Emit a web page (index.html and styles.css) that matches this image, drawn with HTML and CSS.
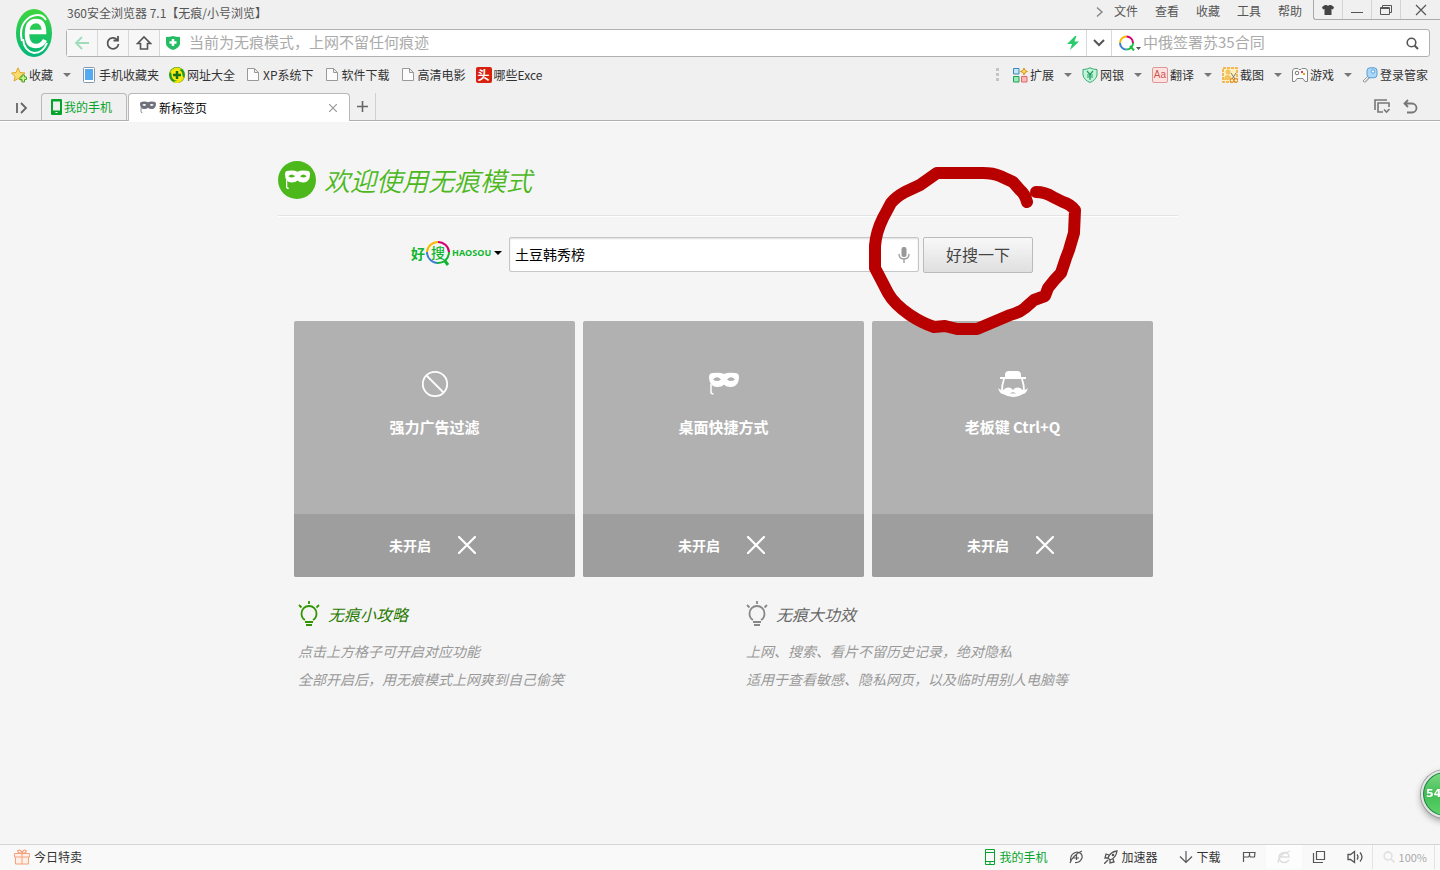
FILE: index.html
```html
<!DOCTYPE html>
<html lang="zh-CN">
<head>
	<meta charset="utf-8">
	<title>新标签页</title>
	<link rel="stylesheet" href="styles.css">
</head>
<body>
	<svg class="defs" width="0" height="0">
		<symbol id="mask" viewBox="0 0 30 24">
			<path fill="currentColor" fill-rule="evenodd" d="M0 5Q0 1 4 1Q11 0 15 2Q19 0 26 1Q30 1 30 5Q30 14.500 22 15Q17 15 15 12.500Q13 15 8 15Q0 14.500 0 5ZM4 7.500Q8 3 12 7.500Q8 10.500 4 7.500ZM18 7.500Q22 3 26 7.500Q22 10.500 18 7.500Z"/>
			<path d="M2 12V20Q2 22 4.500 22" fill="none" stroke="currentColor" stroke-width="1.500"/>
		</symbol>
		<symbol id="doc" viewBox="0 0 16 16">
			<path d="M2.500 1.500H9.500L13.500 5.500V13.500H2.500ZM9.500 1.500V5.500H13.500" fill="#fcfcfc" stroke="#999"/>
		</symbol>
		<symbol id="bulb" viewBox="0 0 22 26">
			<path d="M7 19Q3.500 17 3.500 12.500A7.500 7.500 0 0 1 18.500 12.500Q18.500 17 15 19M7 21H15M8 24H14M11 0V3M1 4L3.500 6.500M21 4L18.500 6.500" fill="none" stroke="currentColor" stroke-width="1.800"/>
		</symbol>
		<symbol id="cross" viewBox="0 0 20 20">
			<path d="M2 2L18 18M18 2L2 18" stroke="#fff" stroke-width="2.200" stroke-linecap="round"/>
		</symbol>
	</svg>

	<header>
		<div class="top">
			<svg class="logo" width="36" height="48" viewBox="0 0 36 48">
				<defs><linearGradient id="green" x2="0" y2="1"><stop stop-color="#3ed63c"/><stop offset="1" stop-color="#02b67c"/></linearGradient></defs>
				<ellipse cx="18" cy="24" rx="18" ry="24" fill="url(#green)"/>
				<path d="M12 23H28Q28 12 20 12Q11 12 11 25Q11 37 20 37Q26 37 29 31" fill="none" stroke="#fff" stroke-width="4.500"/>
				<path d="M6 32Q2 16 14 8Q25 3 30 11M7 30Q8 42 18 44Q27 44 31 34" fill="none" stroke="#fff" stroke-width="2"/>
			</svg>
			<div class="rows">
				<div class="titlebar">
					<span class="title">360安全浏览器 7.1【无痕/小号浏览】</span>
					<nav class="menu">
						<svg width="8" height="12" viewBox="0 0 8 12"><path d="M1 1.500L6 6L1 10.500" fill="none" stroke="#888" stroke-width="1.500"/></svg>
						<a href="#">文件</a>
						<a href="#">查看</a>
						<a href="#">收藏</a>
						<a href="#">工具</a>
						<a href="#">帮助</a>
					</nav>
					<div class="winbuttons">
						<button type="button" aria-label="皮肤"><svg width="12" height="10" viewBox="0 0 12 10"><path d="M3 0H4.500Q6 1.500 7.500 0H9L12 2L11 4.500L9.500 4V10H2.500V4L1 4.500L0 2Z" fill="#444"/></svg></button>
						<button type="button" aria-label="最小化"><svg width="12" height="10" viewBox="0 0 12 10"><path d="M0 7.500H12" stroke="#555"/></svg></button>
						<button type="button" aria-label="还原"><svg width="12" height="10" viewBox="0 0 12 10"><path d="M2.500 2V.5H11.500V7.500H10M.5 2.500H9.500V9.500H.5ZM.5 3.500H9.500" fill="none" stroke="#555"/></svg></button>
						<button type="button" class="close" aria-label="关闭"><svg width="12" height="12" viewBox="0 0 12 12"><path d="M1 1L11 11M11 1L1 11" stroke="#555" stroke-width="1.200"/></svg></button>
					</div>
				</div>
				<div class="address">
					<button type="button" aria-label="后退"><svg width="16" height="16" viewBox="0 0 16 16"><path d="M15 8H2M8 2L2 8L8 14" fill="none" stroke="#9edcba" stroke-width="1.800"/></svg></button>
					<button type="button" aria-label="刷新"><svg width="16" height="16" viewBox="0 0 16 16"><path d="M12 4.500A5.500 5.500 0 1 0 13.500 9M13 1V5.500H8.500" fill="none" stroke="#555" stroke-width="1.800"/></svg></button>
					<button type="button" aria-label="主页"><svg width="16" height="16" viewBox="0 0 16 16"><path d="M1.500 8.500L8 2L14.500 8.500H11.500V14H4.500V8.500Z" fill="none" stroke="#555" stroke-width="1.600"/></svg></button>
					<svg class="shield" width="14" height="14" viewBox="0 0 14 14"><path d="M0 1Q4 1 7 0Q10 1 14 1V8Q13 12 7 14Q1 12 0 8Z" fill="#25bd63"/><path d="M7 3V10M3.500 6.500H10.500" stroke="#fff" stroke-width="2.500"/></svg>
					<input class="url" type="text" aria-label="地址栏" placeholder="当前为无痕模式，上网不留任何痕迹">
					<svg class="bolt" width="14" height="14" viewBox="0 0 14 14"><path d="M9 0L1 8H6L4 14L13 5.500H8.500L10.500 0Z" fill="#2bcb6b"/></svg>
					<button type="button" class="drop" aria-label="展开"><svg width="12" height="8" viewBox="0 0 12 8"><path d="M1 1L6 6L11 1" fill="none" stroke="#555" stroke-width="2"/></svg></button>
					<svg class="engine" width="22" height="16" viewBox="0 0 22 16"><g fill="none" stroke-width="2"><path d="M1 8A6.500 6.500 0 0 1 7.500 1.500" stroke="#f9b800"/><path d="M7.500 1.500A6.500 6.500 0 0 1 14 8" stroke="#d6006c"/><path d="M14 8A6.500 6.500 0 0 1 7.500 14.500M11 11L15 15.500" stroke="#1bc043"/><path d="M7.500 14.500A6.500 6.500 0 0 1 1 8" stroke="#3d80d0"/></g><path d="M17 12H22L19.500 15Z" fill="#555"/></svg>
					<input class="find" type="text" aria-label="搜索" placeholder="中俄签署苏35合同">
					<svg width="13" height="13" viewBox="0 0 13 13"><circle cx="5.500" cy="5.500" r="4.300" fill="none" stroke="#555" stroke-width="1.600"/><path d="M8.500 8.500L12 12" stroke="#555" stroke-width="2"/></svg>
				</div>
			</div>
		</div>

		<div class="bookmarks">
			<a href="#"><svg width="16" height="16" viewBox="0 0 16 16"><path d="M7 .8L9 5.500L14 6L10 9.500L11 14L7 11.500L3 14L4 9.500L.5 6L5 5.500Z" fill="#fbdc6c" stroke="#dfa52e"/><path d="M9 10H11V8H13.500V10H15.500V12.500H13.500V15H11V12.500H9Z" fill="#c8f58e" stroke="#44a323"/></svg>收藏</a>
			<i class="caret"></i>
			<a href="#"><svg width="16" height="16" viewBox="0 0 16 16"><rect x="2.500" y=".5" width="11" height="15" rx="1" fill="#fff" stroke="#8297aa"/><rect x="4" y="2" width="8" height="11" fill="#55a9ef"/></svg>手机收藏夹</a>
			<a href="#"><svg width="16" height="16" viewBox="0 0 16 16"><circle cx="8" cy="8" r="8" fill="#249c16"/><path d="M1 5A8 8 0 0 1 13 2L8 4L4 8ZM15 11A8 8 0 0 1 4 15L9 13L13 8Z" fill="#f5e000"/><circle cx="8" cy="8" r="5.500" fill="#fae918"/><path d="M8 4V12M4 8H12" stroke="#137316" stroke-width="2.500"/></svg>网址大全</a>
			<a href="#"><svg width="16" height="16"><use href="#doc"/></svg>XP系统下</a>
			<a href="#"><svg width="16" height="16"><use href="#doc"/></svg>软件下载</a>
			<a href="#"><svg width="16" height="16"><use href="#doc"/></svg>高清电影</a>
			<a href="#"><span class="tou">头</span>哪些Exce</a>
			<div class="tools">
				<svg class="dots" width="3" height="14" viewBox="0 0 3 14"><path d="M0 1.500H3M0 6.500H3M0 11.500H3" stroke="#c4c4c4" stroke-width="3"/></svg>
				<a href="#"><svg width="16" height="16" viewBox="0 0 16 16"><path d="M1.500 1.500H7V7H1.500Z" fill="#c3e6fb" stroke="#3d86b8"/><path d="M1.500 9.500H7V15H1.500Z" fill="#91eeb8" stroke="#279d5c"/><path d="M9.500 9.500H15V15H9.500Z" fill="#ffb9b9" stroke="#d66"/><path d="M12 1L13 3.500L15.500 4.500L13 5.500L12 8L11 5.500L8.500 4.500L11 3.500Z" fill="#ffe55c" stroke="#d79216"/></svg>扩展</a>
				<i class="caret"></i>
				<a href="#"><svg width="16" height="16" viewBox="0 0 16 16"><path d="M8 .8Q11 2.500 15 2.500V8Q14 13 8 15.500Q2 13 1 8V2.500Q5 2.500 8 .8Z" fill="#c2f5d8" stroke="#3aaa74"/><path d="M5 4L8 7.500L11 4M5 8H11M5 10H11M8 7.500V13" fill="none" stroke="#269e63" stroke-width="1.200"/></svg>网银</a>
				<i class="caret"></i>
				<a href="#"><span class="aa">Aa</span>翻译</a>
				<i class="caret"></i>
				<a href="#"><svg width="16" height="16" viewBox="0 0 16 16"><rect x="1" y="1" width="14" height="14" fill="#fff1bd" stroke="#efa52d" stroke-width="1.500" stroke-dasharray="3 1"/><circle cx="6" cy="5" r="2.500" fill="#f2c562"/><path d="M2 13Q2 8 6 8Q9 8 10 13Z" fill="#f2c562"/><path d="M9 6L13 12M14 6L10 12" stroke="#777"/><circle cx="10" cy="13.500" r="1.800" fill="#fff1bd" stroke="#d97b16"/><circle cx="14" cy="13.500" r="1.800" fill="#fff1bd" stroke="#d97b16"/></svg>截图</a>
				<i class="caret"></i>
				<a href="#"><svg width="16" height="16" viewBox="0 0 16 16"><path d="M3 1.500H6L7 2.500H9L10 1.500H13Q15 1.500 15.500 4V14.500H13L11 11.500H5L3 14.500H.5V4Q1 1.500 3 1.500Z" fill="#fcfcfc" stroke="#858585"/><circle cx="5" cy="6" r="1.800" fill="none" stroke="#777"/><path d="M9 4H11V6H9Z" fill="#e33"/><path d="M11 6H13V8H11Z" fill="#e9a31b"/></svg>游戏</a>
				<i class="caret"></i>
				<a href="#"><svg width="16" height="16" viewBox="0 0 16 16"><path d="M6 9L1 14L2 15H4V13H6V11H8" fill="#fff" stroke="#999"/><rect x="5" y=".8" width="10" height="10" rx="3" fill="#aad8fa" stroke="#5b9ed0"/><circle cx="11" cy="4.500" r="1.700" fill="#fff" stroke="#5b9ed0"/></svg>登录管家</a>
			</div>
		</div>

		<div class="tabs">
			<button type="button" class="side" aria-label="侧边栏"><svg width="12" height="12" viewBox="0 0 12 12"><path d="M1 1V11M5 1L10 6L5 11" fill="none" stroke="#666" stroke-width="1.800"/></svg></button>
			<button type="button" class="tab phone"><svg width="11" height="16" viewBox="0 0 11 16"><rect width="11" height="16" rx="1" fill="#06a42d"/><path d="M2 2.500H9V11.500H2Z" fill="#f0f0f0"/><path d="M4.500 13.500H6.500" stroke="#fff"/></svg>我的手机</button>
			<div class="tab active">
				<svg width="16" height="13"><use href="#mask"/></svg>
				<span>新标签页</span>
				<button type="button" aria-label="关闭标签页"><svg width="8" height="8" viewBox="0 0 8 8"><path d="M0 0L8 8M8 0L0 8" stroke="#999" stroke-width="1.200"/></svg></button>
			</div>
			<button type="button" class="plus" aria-label="新建标签页"><svg width="11" height="11" viewBox="0 0 11 11"><path d="M5.500 0V11M0 5.500H11" stroke="#666" stroke-width="1.600"/></svg></button>
			<div class="tabtools">
				<button type="button" aria-label="标签列表"><svg width="17" height="15" viewBox="0 0 17 15"><path d="M1 11V1H13M9 13H4V4H15V8M10 10.500L12.500 13L15.500 10" fill="none" stroke="#777" stroke-width="1.600"/></svg></button>
				<button type="button" aria-label="恢复标签页"><svg width="15" height="15" viewBox="0 0 15 15"><path d="M5 1L1.500 4.500L5 8M2 4.500H9A4.500 4.500 0 0 1 9 13.500H4" fill="none" stroke="#777" stroke-width="1.800"/></svg></button>
			</div>
		</div>
	</header>

	<main>
		<div class="page">
			<h1><span class="badge"><svg width="25" height="20"><use href="#mask"/></svg></span>欢迎使用无痕模式</h1>

			<form class="search">
				<button type="button" class="haosou">
					<span>好</span>
					<span class="ring"><svg width="26" height="26" viewBox="0 0 26 26"><g fill="none" stroke-width="2"><path d="M2 12A11 11 0 0 1 13 2" stroke="#f9b800"/><path d="M13 2A11 11 0 0 1 24 12" stroke="#d6006c"/><path d="M24 12A11 11 0 0 1 12 23" stroke="#10b530"/><path d="M12 23A11 11 0 0 1 2 12" stroke="#3d80d0"/><path d="M20 21L23 25" stroke="#10b530" stroke-width="3"/></g></svg><b>搜</b></span>
					<span class="en">HAOSOU</span>
					<i class="caret"></i>
				</button>
				<div class="box">
					<input type="text" aria-label="搜索内容" value="土豆韩秀榜">
					<svg width="12" height="16" viewBox="0 0 12 16"><rect x="3.500" width="5" height="10" rx="2" fill="#999"/><path d="M1 7Q1 12 6 12Q11 12 11 7M6 12V16" fill="none" stroke="#999" stroke-width="1.300"/></svg>
				</div>
				<button type="button" class="go">好搜一下</button>
			</form>

			<div class="cards">
				<button type="button" class="card">
					<span class="face">
						<svg width="30" height="28" viewBox="0 0 30 28"><circle cx="15" cy="14" r="12.200" fill="none" stroke="#fff" stroke-width="1.800"/><path d="M6.500 5.500L23.500 22.500" stroke="#fff" stroke-width="1.800"/></svg>
						强力广告过滤
					</span>
					<span class="state">未开启<svg width="20" height="20"><use href="#cross"/></svg></span>
				</button>
				<button type="button" class="card">
					<span class="face">
						<svg width="30" height="28"><use href="#mask"/></svg>
						桌面快捷方式
					</span>
					<span class="state">未开启<svg width="20" height="20"><use href="#cross"/></svg></span>
				</button>
				<button type="button" class="card">
					<span class="face">
						<svg width="30" height="28" viewBox="0 0 30 28"><path d="M7 7V5Q7 1 11 1H19Q23 1 23 5V7H28V9H2V7Z" fill="#fff"/><path d="M6 9Q4 15 4 20M24 9Q26 15 26 20" fill="none" stroke="#fff" stroke-width="1.800"/><path d="M0 18Q4 22 7 18.500Q12 16 15 20Q18 16 23 18.500Q26 22 30 18Q28 24 25 24Q15 30 5 24Q2 24 0 18Z" fill="#fff"/><path d="M12 23.500Q15 21 18 23.500Z" fill="#b1b1b1"/></svg>
						老板键 Ctrl+Q
					</span>
					<span class="state">未开启<svg width="20" height="20"><use href="#cross"/></svg></span>
				</button>
			</div>

			<div class="tips">
				<section>
					<h2 class="on"><svg width="22" height="26"><use href="#bulb"/></svg>无痕小攻略</h2>
					<p>点击上方格子可开启对应功能</p>
					<p>全部开启后，用无痕模式上网爽到自己偷笑</p>
				</section>
				<section>
					<h2><svg width="22" height="26"><use href="#bulb"/></svg>无痕大功效</h2>
					<p>上网、搜索、看片不留历史记录，绝对隐私</p>
					<p>适用于查看敏感、隐私网页，以及临时用别人电脑等</p>
				</section>
			</div>

			<svg class="marker" width="216" height="176" viewBox="868 162 216 176">
				<path d="M1027 202Q1025 194 1020 190L1013 182L1000 176Q993 173 983 173H937L920 185L905 192Q896 197 891 203L883 218Q876 232 875 246V268L888 293Q894 304 910 315Q922 323 934 327L945 326L957 329H977L1010 315Q1019 313 1025 308L1034 300L1045 296L1048 288Q1054 280 1061 273L1066 258L1069 250L1074 233L1075 210Q1070 204 1063 202L1053 197Q1045 192 1036 192"/>
			</svg>
		</div>
	</main>

	<button type="button" class="ball">54</button>

	<footer>
		<a href="#" class="sale"><svg width="16" height="16" viewBox="0 0 16 16"><path d="M.5 4.500H15.500V8H.5ZM1.500 8V15H14.500V8M8 4.500V15" fill="#fff0e8" stroke="#f6a27c"/><path d="M8 4.500Q3 4 4 1.500Q7 0 8 4.500Q9 0 12 1.500Q13 4 8 4.500" fill="none" stroke="#f6a27c" stroke-width="1.300"/></svg>今日特卖</a>
		<a href="#" class="mine"><svg width="12" height="16" viewBox="0 0 12 16"><path d="M1.500.5H10.500V15.500H1.500ZM1.500 3.500H10.500M1.500 12.500H10.500M5 14H7" fill="none" stroke="#06a42d"/></svg>我的手机</a>
		<a href="#" aria-label="加速"><svg width="14" height="14" viewBox="0 0 14 14"><path d="M2 12Q0 4 8 2Q14 3 13 8Q11 13 6 12.500M1 13Q4 5 13 1M4 8H10M7.500 4V10" fill="none" stroke="#555" stroke-width="1.200"/></svg></a>
		<a href="#"><svg width="14" height="14" viewBox="0 0 14 14"><path d="M4 8Q6 2 13 1Q12 8 6 10ZM5 5L2 4L1 8L4 8M9 9L10 12L6 13V10M4 10L0 14" fill="none" stroke="#555" stroke-width="1.300"/><circle cx="9" cy="5" r="1.300" fill="#555"/></svg>加速器</a>
		<a href="#"><svg width="14" height="14" viewBox="0 0 14 14"><path d="M7 1V12M1 6.500L7 12.500L13 6.500" fill="none" stroke="#555" stroke-width="1.200"/></svg>下载</a>
		<a href="#" aria-label="无痕"><svg width="14" height="14" viewBox="0 0 14 14"><path d="M1.500 12V2.500H13L12.500 7H8.500L7.500 5.500L6.500 7H1.500M7.500 2.500V5.500" fill="none" stroke="#555" stroke-width="1.200"/></svg></a>
		<a href="#" class="kernel" aria-label="内核"><svg width="14" height="14" viewBox="0 0 14 14"><path d="M3 7H12Q12 2.500 7.500 2.500Q2 3 2 8Q3 12.500 7.500 12.500Q10 12.500 12 10M1 13Q1 5 13 1" fill="none" stroke="#ddd" stroke-width="1.300"/></svg></a>
		<a href="#" aria-label="窗口"><svg width="14" height="14" viewBox="0 0 14 14"><path d="M4.500 1.500H12.500V9.500H4.500ZM1.500 3V12.500H11" fill="none" stroke="#555" stroke-width="1.200"/></svg></a>
		<a href="#" aria-label="声音"><svg width="16" height="14" viewBox="0 0 16 14"><path d="M1 4.500H3.500L7.500 1.500V12.500L3.500 9.500H1ZM10 4.500Q12 7 10 9.500M13 2.500Q17 7 13 11.500" fill="none" stroke="#555" stroke-width="1.300"/></svg></a>
		<a href="#" class="zoom"><svg width="12" height="12" viewBox="0 0 12 12"><circle cx="5" cy="5" r="4" fill="none" stroke="#ddd" stroke-width="1.300"/><path d="M8 8L11.500 11.500" stroke="#ddd" stroke-width="1.500"/></svg>100%</a>
	</footer>
</body>
</html>
```

FILE: styles.css
```css
* {
	box-sizing: border-box;
}
body {
	margin: 0;
	min-height: 100vh;
	display: flex;
	flex-direction: column;
	overflow-x: hidden;
	background-color: #f5f5f5;
	color: #333;
	font-family: "Noto Sans CJK SC", sans-serif;
	font-size: 12px;
	line-height: 16px;
}
button, input {
	font: inherit;
	color: inherit;
	border: 0;
	padding: 0;
	background: none;
}
input {
	outline: 0;
	min-width: 0;
	padding-bottom: 2px;
}
a {
	color: inherit;
	text-decoration: none;
}
svg {
	display: block;
	flex: none;
}
.defs {
	position: absolute;
}
.caret {
	border: 4px solid transparent;
	border-top: 4px solid #777;
	border-bottom: 0;
}

/* browser frame */
header {
	background-color: #f0f0f0;
}
.top {
	display: flex;
}
.logo {
	margin: 9px 14px 0 16px;
}
.rows {
	flex: 1;
}
.titlebar {
	display: flex;
	height: 29px;
	color: #555;
}
.title {
	flex: 1;
	padding: 5px 0 0 1px;
}
.menu {
	display: flex;
	gap: 17px;
	padding-top: 3px;
	margin-right: 11px;
}
.menu svg {
	margin: 3px -7px 0 0;
}
.winbuttons {
	display: flex;
	height: 20px;
	border: solid #aaa;
	border-width: 0 0 1px 1px;
	border-radius: 0 0 0 3px;
}
.winbuttons button {
	width: 29px;
	display: flex;
	justify-content: center;
	align-items: center;
	border-right: 1px solid #d4d4d4;
}
.winbuttons .close {
	width: 39px;
	border-right: 0;
}
.address {
	display: flex;
	align-items: center;
	height: 28px;
	margin-right: 10px;
	padding-right: 10px;
	border: 1px solid #b0b0b0;
	border-radius: 3px;
	background-color: #fff;
	font-size: 15px;
}
.address button {
	width: 31px;
	height: 26px;
	display: flex;
	justify-content: center;
	align-items: center;
	border-right: 1px solid #d8d8d8;
	background-color: #f7f7f7;
}
.address .drop {
	width: 26px;
	border-left: 1px solid #d8d8d8;
	background-color: #fff;
}
.address input::placeholder {
	color: #aaa;
	opacity: 1;
}
.shield {
	margin: 0 9px 0 6px;
}
.url {
	flex: 1;
}
.bolt {
	margin: 0 6px;
}
.engine {
	margin: 0 2px 0 7px;
}
.find {
	width: 263px;
}

.bookmarks {
	display: flex;
	align-items: center;
	gap: 10px;
	height: 36px;
	padding: 0 12px 0 11px;
	white-space: nowrap;
}
.bookmarks a {
	display: flex;
	align-items: center;
	gap: 2px;
}
.tools {
	display: flex;
	align-items: center;
	gap: 10px;
	margin-left: auto;
}
.dots {
	margin-right: 3px;
}
.tou, .aa {
	width: 16px;
	height: 16px;
	border-radius: 2px;
	text-align: center;
}
.tou {
	background-color: #d9200f;
	color: #fff;
	font-weight: bold;
}
.aa {
	border: 1px solid #d99;
	background-color: #ffe2e0;
	color: #cc5550;
	font-family: "Liberation Sans", sans-serif;
	font-size: 10px;
	line-height: 14px;
}

.tabs {
	display: flex;
	height: 28px;
	border-bottom: 1px solid #b0b0b0;
}
.side {
	padding: 2px 13px 0 16px;
}
.tab {
	display: flex;
	align-items: center;
	border: 1px solid #b8b8b8;
	border-bottom: 0;
	border-radius: 4px 4px 0 0;
}
.phone {
	width: 86px;
	padding-left: 9px;
	gap: 2px;
	color: #06a42d;
}
.active {
	width: 222px;
	height: 28px;
	margin-left: 1px;
	padding: 0 12px 0 11px;
	gap: 3px;
	background-color: #fff;
	color: #000;
}
.active > svg {
	color: #6e717b;
}
.active button {
	margin-left: auto;
}
.plus {
	padding: 0 7px;
	border-right: 1px solid #d0d0d0;
}
.tabtools {
	display: flex;
	gap: 12px;
	margin-left: auto;
	padding-right: 22px;
}

/* new tab page */
main {
	flex: 1;
	padding: 39px 0 30px 16px;
	border-top: 1px solid #fff;
}
.page {
	position: relative;
	max-width: 900px;
	margin: 0 auto;
}
h1 {
	display: flex;
	align-items: center;
	gap: 8px;
	height: 55px;
	margin: 0;
	padding-bottom: 17px;
	border-bottom: 1px solid #e3e3e3;
	box-shadow: 0 1px #fff;
	color: #4cb81c;
	font-size: 26px;
	font-weight: 350;
	font-style: italic;
}
.badge {
	display: flex;
	justify-content: center;
	align-items: center;
	width: 38px;
	height: 38px;
	border-radius: 50%;
	background-color: #4cb81c;
	color: #fff;
}
.search {
	display: flex;
	margin: 21px 145px 0 133px;
}
.haosou {
	display: flex;
	align-items: center;
	width: 98px;
	height: 32px;
	color: #10b530;
	font-size: 14px;
	font-weight: bold;
}
.haosou .caret {
	border-top-color: #000;
	margin-left: 3px;
}
.ring {
	position: relative;
	margin-right: 1px;
}
.ring b {
	position: absolute;
	top: 4px;
	left: 6px;
	font-weight: 500;
}
.en {
	font-family: "Open Sans", sans-serif;
	font-size: 9px;
}
.box {
	flex: 1;
	display: flex;
	align-items: center;
	height: 35px;
	margin-right: 4px;
	padding: 0 8px 0 5px;
	border: 1px solid #c6c6c6;
	border-radius: 2px;
	background-color: #fff;
	box-shadow: inset 0 1px 2px #ddd;
}
.box input {
	flex: 1;
	color: #000;
	font-size: 14px;
}
.go {
	width: 110px;
	height: 36px;
	padding-bottom: 2px;
	border: 1px solid #bbb;
	border-radius: 2px;
	background-image: linear-gradient(#f8f8f8, #dfdfdf);
	font-size: 16px;
	color: #444;
}
.cards {
	display: grid;
	grid-template-columns: 1fr 1fr 1fr;
	gap: 8px;
	margin: 48px 25px 0 16px;
}
.card {
	display: flex;
	flex-direction: column;
	border-radius: 2px;
	overflow: hidden;
	background-color: #b1b1b1;
	color: #fff;
	font-weight: bold;
}
.face {
	display: flex;
	flex-direction: column;
	align-items: center;
	gap: 21px;
	width: 100%;
	height: 193px;
	padding-top: 49px;
	font-size: 15px;
}
.state {
	display: flex;
	justify-content: center;
	align-items: center;
	gap: 26px;
	width: 100%;
	height: 63px;
	padding: 0 3px 2px 0;
	background-color: #9e9e9e;
	font-size: 14px;
}
.tips {
	display: grid;
	grid-template-columns: 1fr 1fr;
	margin: 24px -16px 0 20px;
	font-style: italic;
}
h2 {
	display: flex;
	align-items: center;
	gap: 8px;
	margin: 0 0 10px;
	color: #666;
	font-size: 16px;
	font-weight: normal;
}
h2 svg {
	color: #888;
}
.on, .on svg {
	color: #329600;
}
.on {
	color: #287a00;
}
p {
	margin: 0;
	color: #999;
	font-size: 14px;
	line-height: 28px;
}
.marker {
	position: absolute;
	top: 1px;
	left: 590px;
	pointer-events: none;
}
.marker path {
	fill: none;
	stroke: #b90000;
	stroke-width: 12px;
	stroke-linecap: round;
	stroke-linejoin: round;
}
.ball {
	position: fixed;
	right: -29px;
	bottom: 52px;
	width: 48px;
	height: 48px;
	padding-left: 3px;
	border: 2px solid #e4e4e4;
	border-radius: 50%;
	background-image: linear-gradient(#7edb85, #42bd55 50%, #5dd46a);
	box-shadow: 0 0 0 1px #999, inset 0 0 0 1px #1c7f45, 0 3px 7px #999;
	color: #fff;
	font-family: "DejaVu Sans", sans-serif;
	font-size: 11px;
	font-weight: bold;
	text-align: left;
}

/* status bar */
footer {
	display: flex;
	align-items: center;
	gap: 21px;
	height: 26px;
	padding: 0 5px 1px 0;
	border-top: 1px solid #d5d5d5;
	background-color: #f9f9f9;
}
footer a {
	display: flex;
	align-items: center;
	gap: 4px;
}
.sale {
	flex: 1;
	padding-left: 14px;
}
.mine {
	color: #06a42d;
}
.kernel {
	height: 24px;
	padding: 0 11px;
	margin: 0 -11px;
	background-color: #fdfdfd;
}
.zoom {
	height: 24px;
	margin-left: -12px;
	padding: 0 7px 0 10px;
	border: solid #e3e3e3;
	border-width: 0 1px;
	color: #aaa;
	font-size: 11px;
}
```
